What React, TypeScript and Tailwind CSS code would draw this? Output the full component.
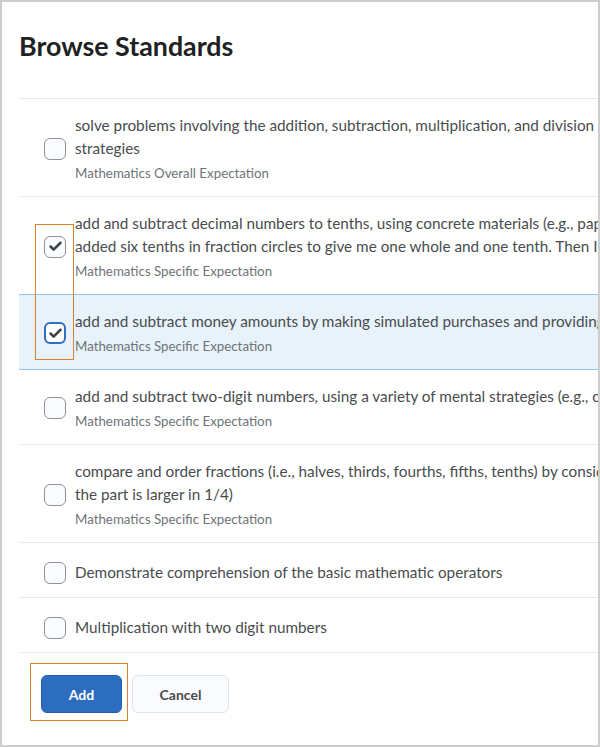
import { Check } from 'lucide-react';

type Standard = {
  id: number;
  lines: string[];
  category?: string;
  checked?: boolean;
  selected?: boolean;
};

const standards: Standard[] = [
  {
    id: 1,
    lines: [
      'solve problems involving the addition, subtraction, multiplication, and division of whole numbers, using a variety of',
      'strategies',
    ],
    category: 'Mathematics Overall Expectation',
  },
  {
    id: 2,
    lines: [
      'add and subtract decimal numbers to tenths, using concrete materials (e.g., paper strips divided into tenths, base ten materials,',
      'added six tenths in fraction circles to give me one whole and one tenth. Then I added the two wholes.")',
    ],
    category: 'Mathematics Specific Expectation',
    checked: true,
  },
  {
    id: 3,
    lines: ['add and subtract money amounts by making simulated purchases and providing change for amounts up to $100'],
    category: 'Mathematics Specific Expectation',
    checked: true,
    selected: true,
  },
  {
    id: 4,
    lines: ['add and subtract two-digit numbers, using a variety of mental strategies (e.g., one way to calculate 73 - 38 is to'],
    category: 'Mathematics Specific Expectation',
  },
  {
    id: 5,
    lines: [
      'compare and order fractions (i.e., halves, thirds, fourths, fifths, tenths) by considering the size and the number of fractional parts',
      'the part is larger in 1/4)',
    ],
    category: 'Mathematics Specific Expectation',
  },
  { id: 6, lines: ['Demonstrate comprehension of the basic mathematic operators'] },
  { id: 7, lines: ['Multiplication with two digit numbers'] },
];

function Checkbox({ checked, selected }: { checked?: boolean; selected?: boolean }) {
  return (
    <span
      className={
        selected
          ? 'flex h-[22px] w-[22px] shrink-0 items-center justify-center rounded-[6px] border-2 border-[#2f6fc4] bg-white'
          : 'flex h-[22px] w-[22px] shrink-0 items-center justify-center rounded-[6px] border border-[#8d9296] bg-[#f9fbff]'
      }
    >
      {checked && <Check size={15} strokeWidth={4} className="text-[#3e4143]" />}
    </span>
  );
}

export default function App() {
  return (
    <div className="relative h-[747px] w-[600px] overflow-hidden border-2 border-[#cdcdcd] bg-white font-['Lato',sans-serif]">
      <div className="h-[96px] pl-[17px] pt-[27px]">
        <h1 className="text-[26.8px] font-bold leading-[34px] text-[#202122]">Browse Standards</h1>
      </div>

      <ul className="ml-[17px] w-[1400px] border-t border-[#e3e9f1]">
        {standards.map((item, index) => {
          const nextSelected = standards[index + 1]?.selected;
          const borderColor = item.selected || nextSelected ? 'border-[#93c7f4]' : 'border-[#e3e9f1]';
          return (
            <li
              key={item.id}
              className={`flex items-center gap-[9px] border-b ${borderColor} pl-[25px] ${
                item.category ? 'pb-[13px] pt-[15px]' : 'pb-[13px] pt-[18px]'
              } ${item.selected ? 'bg-[#e8f2fa]' : ''}`}
            >
              <Checkbox checked={item.checked} selected={item.selected} />
              <div className="min-w-0">
                {item.lines.map((line) => (
                  <p key={line} className="whitespace-nowrap text-[15.3px] leading-[23px] text-[#494c4e]">
                    {line}
                  </p>
                ))}
                {item.category && (
                  <p className="mt-[3px] whitespace-nowrap text-[13.3px] leading-[20px] text-[#6e7477]">{item.category}</p>
                )}
              </div>
            </li>
          );
        })}
      </ul>

      <div className="flex gap-[10px] pl-[39px] pt-[22px]">
        <button
          type="button"
          className="h-[38px] w-[81px] rounded-[6px] border border-[#2560ad] bg-[#2d6dbf] text-[14px] font-bold text-white"
        >
          Add
        </button>
        <button
          type="button"
          className="h-[38px] w-[97px] rounded-[6px] border border-[#dfe5ec] bg-[#f9fbff] text-[14px] font-bold text-[#494c4e]"
        >
          Cancel
        </button>
      </div>

      {/* callout frames */}
      <div className="pointer-events-none absolute left-[33px] top-[222px] h-[136px] w-[39px] border border-[#d9812f]" />
      <div className="pointer-events-none absolute left-[28px] top-[661px] h-[58px] w-[98px] border border-[#d9812f]" />
    </div>
  );
}
